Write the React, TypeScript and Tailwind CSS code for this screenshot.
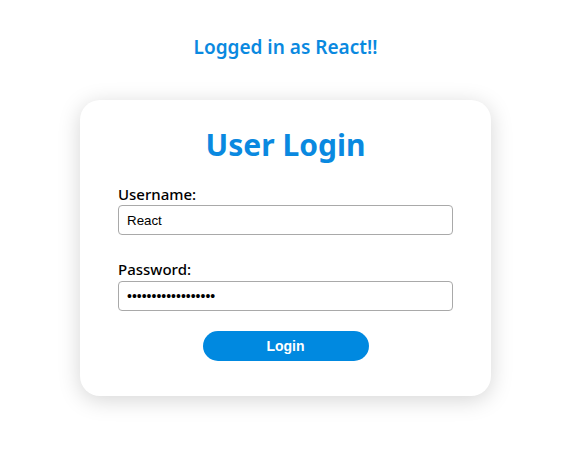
import React from "react";

export default function App() {
  return (
    <div className="min-h-screen bg-white pl-[7px] font-['Noto_Sans',sans-serif]">
      <div className="flex flex-col items-center pt-[32px]">
        <h3 className="text-[19px] font-semibold leading-[30px] text-[#0a89e0]">
          Logged in as React!!
        </h3>

        <div className="mt-[38px] w-[411px] rounded-[20px] bg-white px-[38px] pt-[24px] pb-[35px] shadow-[0_4px_22px_rgba(0,0,0,0.17)]">
          <h1 className="text-center text-[30px] font-bold leading-[42px] text-[#0a89e0]">
            User Login
          </h1>

          <form className="mt-[18px] flex flex-col" onSubmit={(e) => e.preventDefault()}>
            <label className="text-[15px] font-medium leading-[20px] text-black">Username:</label>
            <input
              type="text"
              value="React"
              readOnly
              className="mt-[1px] h-[30px] w-full rounded-[4px] border border-[#a9a9a9] px-[8px] font-['Liberation_Sans',sans-serif] text-[13.33px] text-black outline-none"
            />

            <label className="mt-[24px] text-[15px] font-medium leading-[20px] text-black">Password:</label>
            <input
              type="password"
              value="xxxxxxxxxxxxxxxxxx"
              readOnly
              className="mt-[2px] h-[30px] w-full rounded-[4px] border border-[#a9a9a9] px-[8px] font-['Liberation_Sans',sans-serif] text-[14px] text-black outline-none"
            />

            <button
              type="submit"
              className="mx-auto mt-[20px] h-[30px] w-[166px] rounded-full bg-[#0089e0] font-['Liberation_Sans',sans-serif] text-[14px] font-bold text-white"
            >
              Login
            </button>
          </form>
        </div>
      </div>
    </div>
  );
}
